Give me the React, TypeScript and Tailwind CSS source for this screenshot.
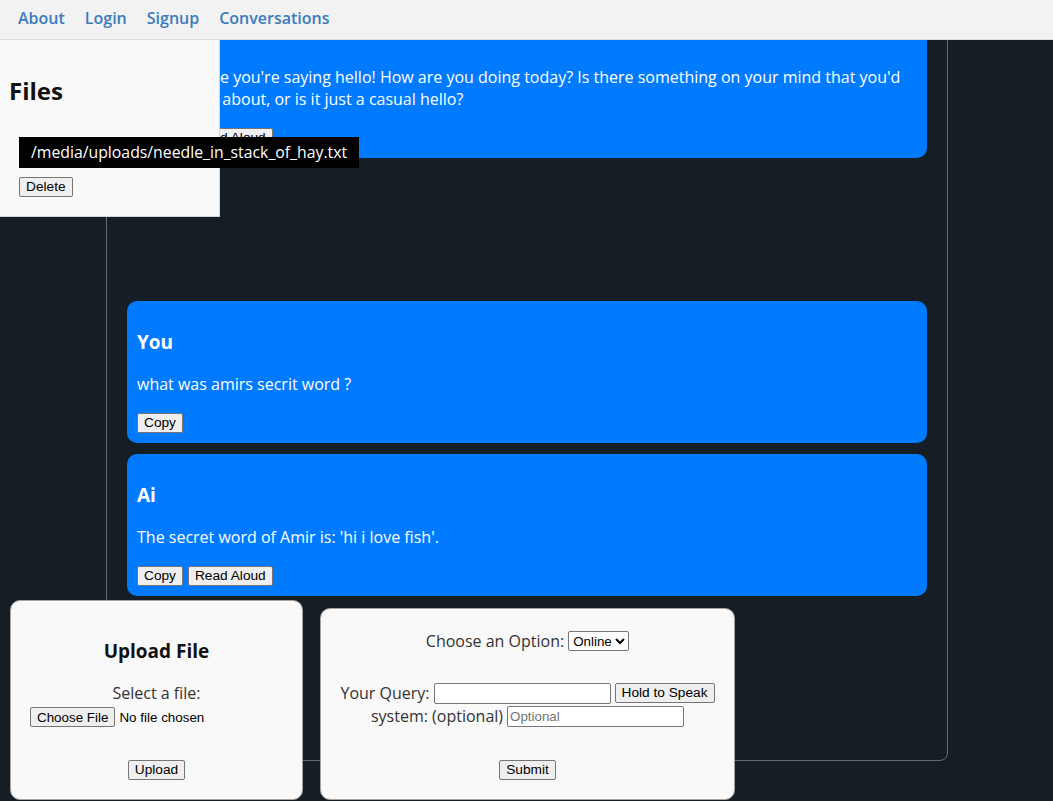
import React from 'react';

const btn =
  "inline-flex h-[20px] items-center rounded-[2px] border border-[#767676] bg-[#efefef] px-[6px] font-['Liberation_Sans',Arial,sans-serif] text-[13.7px] leading-none text-black";

const field =
  "h-[21px] w-[177px] rounded-[2px] border border-[#767676] bg-white px-[2px] font-['Liberation_Sans',Arial,sans-serif] text-[13.333px] text-black placeholder:text-[#757575]";

type Msg = { who: string; text: string; aloud?: boolean };

function Message({ who, text, aloud }: Msg) {
  return (
    <div className="mb-[11px] rounded-[10px] bg-[#007bff] p-[10px] text-white">
      <h3 className="mt-[19px] text-[19px] font-bold leading-[25px]">{who}</h3>
      <p className="mt-[18px] text-[16px] leading-[22px]">{text}</p>
      <div className="mt-[18px] flex gap-[5px]">
        <button className={btn}>Copy</button>
        {aloud && <button className={btn}>Read Aloud</button>}
      </div>
    </div>
  );
}

export default function App() {
  return (
    <div className="relative h-[801px] overflow-hidden bg-[#151e24] font-['Open_Sans',sans-serif]">
      <nav className="flex h-[40px] items-center border-b border-[#dcdcdc] bg-[#f2f2f2] pb-[4px] pl-[8px]">
        {['About', 'Login', 'Signup', 'Conversations'].map((l) => (
          <a key={l} href="#" className="px-[10px] text-[16px] font-semibold text-[#3b7bbf]">
            {l}
          </a>
        ))}
      </nav>

      <main className="flex h-[761px] flex-col justify-end overflow-hidden">
        <div className="mb-[40px] ml-[106px] w-[842px] shrink-0 rounded-b-[8px] border border-[#6b6b6b] px-[20px] pt-[20px] pb-[153px]">
          <Message who="You" text="hello" />
          <Message
            who="Ai"
            aloud
            text="It seems like you're saying hello! How are you doing today? Is there something on your mind that you'd like to chat about, or is it just a casual hello?"
          />
          <div className="h-[132px]" />
          <Message who="You" text="what was amirs secrit word ?" />
          <Message who="Ai" aloud text="The secret word of Amir is: 'hi i love fish'." />
        </div>
      </main>

      {/* files panel */}
      <div className="absolute left-0 top-[40px] h-[177px] w-[220px] border-r border-b border-[#d4d4d4] bg-[#f9f9f9] pl-[9px] pt-[35px]">
        <h2 className="text-[24px] font-bold leading-[32px] text-[#111]">Files</h2>
        <div className="mt-[30px] ml-[10px] w-max whitespace-nowrap bg-black px-[12px] py-[4px] text-[15.8px] leading-[23px] text-white">
          /media/uploads/needle_in_stack_of_hay.txt
        </div>
        <button className={`${btn} mt-[9px] ml-[10px]`}>Delete</button>
      </div>

      {/* bottom forms */}
      <div className="absolute bottom-[1px] left-[10px] flex items-end gap-[17px]">
        <div className="flex h-[200px] w-[293px] flex-col rounded-[10px] border border-[#a3a3a3] bg-[#f9f9f9] px-[19px] pt-[19px] text-center">
          <h3 className="mt-[19px] text-[19px] font-bold leading-[25px] text-[#111]">Upload File</h3>
          <div className="mt-[18px] text-[16px] leading-[22px] text-[#333]">Select a file:</div>
          <input
            type="file"
            className="mt-[3px] block h-[20px] w-full text-left font-['Liberation_Sans',Arial,sans-serif] text-[13.4px] text-black file:mr-[4px] file:h-[20px] file:rounded-[2px] file:border file:border-solid file:border-[#767676] file:bg-[#efefef] file:px-[6px] file:py-0"
          />
          <div className="mt-[33px] flex justify-center">
            <button className={btn}>Upload</button>
          </div>
        </div>

        <div className="h-[192px] w-[415px] rounded-[10px] border border-[#a3a3a3] bg-[#f9f9f9] pt-[19px] text-center text-[16px] text-[#333]">
          <div className="flex h-[26px] items-center justify-center gap-[4px]">
            <span>Choose an Option:</span>
            <select className="h-[20px] rounded-[2px] border border-[#767676] bg-white font-['Liberation_Sans',Arial,sans-serif] text-[13.333px] text-black">
              <option>Online</option>
              <option>Offline</option>
            </select>
          </div>
          <div className="mt-[28px] flex h-[22px] items-center justify-center gap-[4px]">
            <span>Your Query:</span>
            <input type="text" className={field} />
            <button className={btn}>Hold to Speak</button>
          </div>
          <div className="mt-[1px] flex h-[22px] items-center justify-center gap-[4px]">
            <span>system: (optional)</span>
            <input type="text" placeholder="Optional" className={field} />
          </div>
          <div className="mt-[33px] flex justify-center">
            <button className={btn}>Submit</button>
          </div>
        </div>
      </div>
    </div>
  );
}
